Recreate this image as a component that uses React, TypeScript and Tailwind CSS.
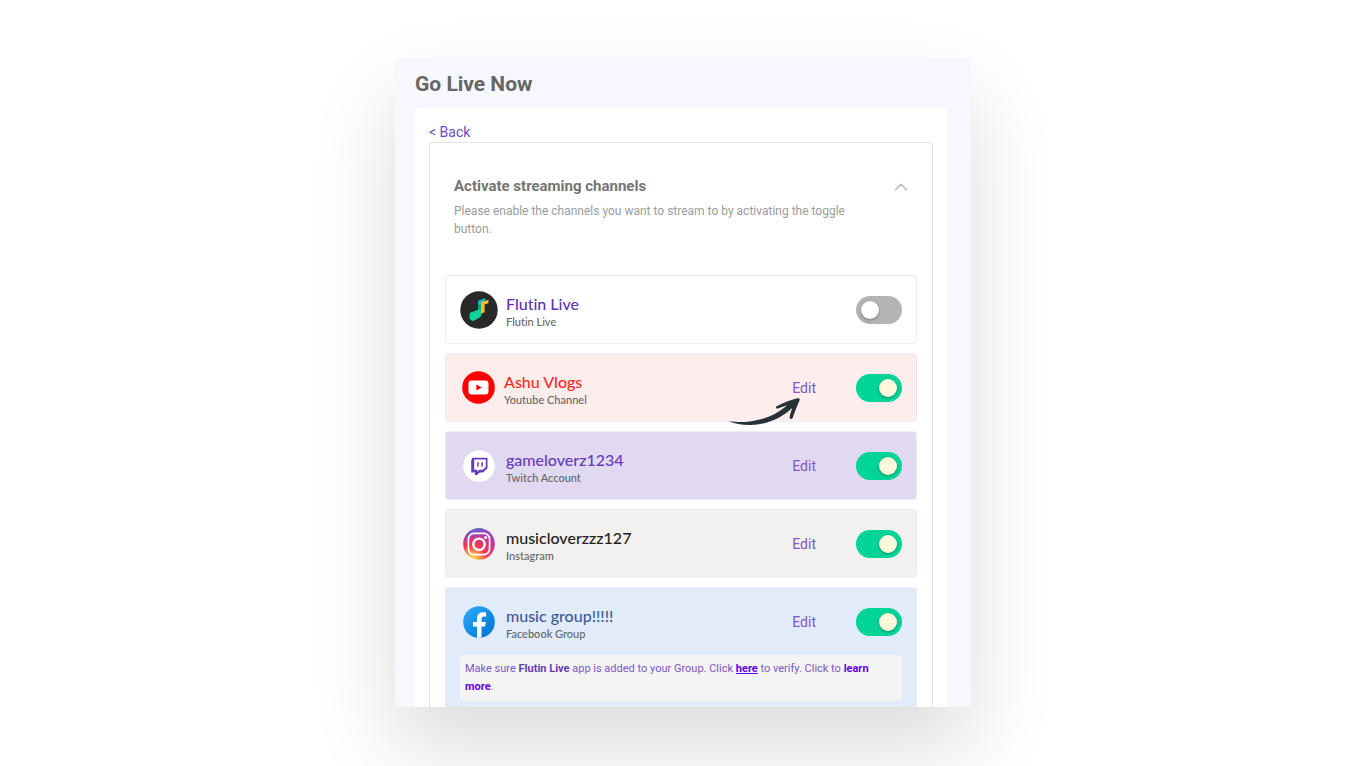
import React, { useState } from 'react';
import { ChevronUp } from 'lucide-react';

interface Channel {
    id: string;
    name: string;
    kind: string;
    icon: React.ReactNode;
    slotClass: string;
    nameClass: string;
    rowClass: string;
    editable: boolean;
    pointer?: boolean;
}

const FlutinIcon = () => (
    <svg width="38" height="38" viewBox="0 0 38 38" aria-hidden="true">
        <circle cx="19" cy="19" r="18.7" fill="#282828" />
        <path d="M18 9.8 25.2 7v4.5l-3.4 1.5v10.5H18z" fill="#0fb5c4" />
        <path d="M18 14l3.2-2v13H18z" fill="#0ca58a" />
        <path d="M20.4 11.6 28.4 8.8v3.4L24.6 13.6v7.6l-3.6 1.6V13z" fill="#fdb92e" />
        <path d="M11.3 21.2l7.5-2.6c1-.4 2 .2 2 1.2v4.6c0 .9-.4 1.6-1.2 2l-5.2 3.2c-.7.4-1.4.5-2.1.1l-1.5-.8c-.8-.4-1.2-1-1.2-1.8v-3.5c0-1.2.6-2 1.7-2.4z" fill="#0fd39a" />
    </svg>
);

const YoutubeIcon = () => (
    <svg width="33" height="33" viewBox="0 0 33 33" aria-hidden="true">
        <circle cx="16.5" cy="16.5" r="16.3" fill="#ff0000" />
        <rect x="6.5" y="9.5" width="20" height="14" rx="3.2" fill="#fff" />
        <path d="M14.3 13.4l5.6 3.1-5.6 3.1z" fill="#f00" />
    </svg>
);

const TwitchIcon = () => (
    <svg width="32" height="32" viewBox="0 0 32 32" aria-hidden="true">
        <circle cx="16" cy="16" r="15.8" fill="#fff" />
        <path
            d="M9.3 7.8h15.2v10.4L20 22.5h-3.3l-2.7 2.6h-2v-2.6H8.2V10.7zm1.9 1.6v10.4h3.2v2l2-2h3.4l3-2.8V9.4z"
            fill="#673ab7"
            fillRule="evenodd"
        />
        <path d="M14.2 12.2h1.5v4.4h-1.5zM18.3 12.2h1.5v4.4h-1.5z" fill="#673ab7" />
    </svg>
);

const InstagramIcon = () => (
    <svg width="32" height="32" viewBox="0 0 32 32" aria-hidden="true">
        <defs>
            <radialGradient id="ig-warm" cx="0.27" cy="1.05" r="1">
                <stop offset="0" stopColor="#ffdd55" />
                <stop offset="0.15" stopColor="#ffcf50" />
                <stop offset="0.5" stopColor="#f8384e" />
                <stop offset="0.85" stopColor="#d0308f" />
                <stop offset="1" stopColor="#a93ab8" />
            </radialGradient>
            <linearGradient id="ig-cool" x1="0.4" y1="0" x2="0.5" y2="0.35">
                <stop offset="0" stopColor="#5a6fc4" />
                <stop offset="1" stopColor="#8a3ac8" stopOpacity="0" />
            </linearGradient>
        </defs>
        <circle cx="16" cy="16" r="15.8" fill="url(#ig-warm)" />
        <circle cx="16" cy="16" r="15.8" fill="url(#ig-cool)" />
        <rect x="5.4" y="5.4" width="21.2" height="21.2" rx="5.6" fill="none" stroke="#fff" strokeWidth="1.7" />
        <circle cx="16" cy="16.3" r="5.7" fill="none" stroke="#fff" strokeWidth="2.4" />
        <circle cx="22.6" cy="9.6" r="1.5" fill="#fff" />
    </svg>
);

const FacebookIcon = () => (
    <svg width="32" height="32" viewBox="0 0 32 32" aria-hidden="true">
        <defs>
            <linearGradient id="fb-blue" x1="0.15" y1="0.1" x2="0.85" y2="0.9">
                <stop offset="0" stopColor="#2aa4f4" />
                <stop offset="1" stopColor="#007ad9" />
            </linearGradient>
        </defs>
        <circle cx="16" cy="16" r="15.8" fill="url(#fb-blue)" />
        <path
            d="M14 31.7V20.6H9.9V16H14v-3.500c0-4.1 2.300-6.2 5.9-6.2 1.2 0 2.3.1 3.1.3v4h-2.1c-1.9 0-2.4 1-2.4 2.3V16h4.3l-.7 4.600h-3.6v11z"
            fill="#fff"
        />
    </svg>
);

// Hand drawn arrow pointing up at the Edit link
const PointerArrow = () => (
    <svg
        className="pointer-events-none absolute top-[19px] right-[14px]"
        width="76"
        height="32"
        viewBox="0 0 76 32"
        aria-hidden="true"
    >
        <path
            d="M2.5 24.3C9 25 17 25.5 24 24.5 40 22.3 52 16.5 61 8.2L51.8 11.600C50.3 12.2 49 10 50.6 9.2 57.500 5.500 64.500 3.300 71.500 1.300 72.800 1 74.200 1.800 73.600 3.200 71 9.800 68.500 15 66.700 20.900 66.200 22.500 63.400 22.100 63.600 20.300 64 17 65.200 14 66.300 11 55 21.500 41 27.500 24.500 28 16.500 28.200 8.500 26.500 2.500 24.300z"
            fill="#263238"
        />
    </svg>
);

const CHANNELS: Channel[] = [
    {
        id: 'flutin',
        name: 'Flutin Live',
        kind: 'Flutin Live',
        icon: <FlutinIcon />,
        slotClass: 'w-[38px]',
        nameClass: 'text-[#5e35b1]',
        rowClass: 'bg-white',
        editable: false
    },
    {
        id: 'youtube',
        name: 'Ashu Vlogs',
        kind: 'Youtube Channel',
        icon: <YoutubeIcon />,
        slotClass: 'w-9',
        nameClass: 'text-[#ff2a1f]',
        rowClass: 'bg-[#fdeeed]',
        editable: true,
        pointer: true
    },
    {
        id: 'twitch',
        name: 'gameloverz1234',
        kind: 'Twitch Account',
        icon: <TwitchIcon />,
        slotClass: 'w-[38px]',
        nameClass: 'text-[#673ab7]',
        rowClass: 'bg-[#e1d9f1]',
        editable: true
    },
    {
        id: 'instagram',
        name: 'musicloverzzz127',
        kind: 'Instagram',
        icon: <InstagramIcon />,
        slotClass: 'w-[38px]',
        nameClass: 'text-[#212121]',
        rowClass: 'bg-[#f2f1ef]',
        editable: true
    },
    {
        id: 'facebook',
        name: 'music group!!!!!',
        kind: 'Facebook Group',
        icon: <FacebookIcon />,
        slotClass: 'w-[38px]',
        nameClass: 'text-[#3b5998]',
        rowClass: 'bg-[#e1ebfa]',
        editable: true
    }
];

interface ChannelRowProps {
    channel: Channel;
    enabled: boolean;
    onToggle: () => void;
}

const ChannelRow: React.FC<ChannelRowProps> = ({ channel, enabled, onToggle }) => (
    <div className="flex h-[67px] items-center px-[14px]">
        <div className={`${channel.slotClass} flex shrink-0 justify-center`}>{channel.icon}</div>
        <label
            htmlFor={channel.id}
            className="ml-2 min-w-0 flex-1 font-['Lato','Noto_Sans',sans-serif] [font-variant-ligatures:none]"
        >
            <span className={`block text-base leading-6 font-medium ${channel.nameClass}`}>{channel.name}</span>
            <span className="block text-[11px] leading-3 font-medium text-[#666]">{channel.kind}</span>
        </label>
        {channel.editable && (
            <div className="relative mr-10">
                <a href="#edit" className="block text-sm leading-5 text-[#7e57c2]">Edit</a>
                {channel.pointer && <PointerArrow />}
            </div>
        )}
        <input
            id={channel.id}
            type="checkbox"
            role="switch"
            checked={enabled}
            onChange={onToggle}
            className="flex h-7 w-[46px] shrink-0 cursor-pointer appearance-none items-center rounded-full bg-[#b4b4b4] px-[5px] before:h-[18px] before:w-[18px] before:rounded-full before:bg-white before:shadow-[0_1px_3px_rgba(0,0,0,0.35)] checked:justify-end checked:bg-[#00d597] checked:before:bg-[#fff8dc]"
        />
    </div>
);

const App: React.FC = () => {
    const [isOpen, setIsOpen] = useState(true);
    const [active, setActive] = useState<string[]>(['youtube', 'twitch', 'instagram', 'facebook']);

    const toggle = (id: string) => {
        setActive(prev => (prev.includes(id) ? prev.filter(item => item !== id) : [...prev, id]));
    };

    return (
        <div className="flex min-h-screen items-start justify-center overflow-hidden bg-white py-[59px] font-['Roboto',sans-serif]">
            <main className="w-full max-w-[576px] bg-[#f6f7ff] pt-[11px] pr-6 pl-5 shadow-[0_40px_80px_rgba(0,0,0,0.14)]">
                <h1 className="mb-[10px] text-[21px] leading-7 font-bold text-[#666]">Go Live Now</h1>

                <div className="rounded-t bg-white px-[14px] pt-[14px]">
                    <a href="#back" className="block w-fit text-sm leading-5 text-[#7348c4]">&lt; Back</a>

                    <section className="rounded-t border border-b-0 border-[#e2e2e2] px-[15px] pt-[33px]">
                        <div className="mb-[37px] flex items-start justify-between pr-[5px] pl-[9px]">
                            <div>
                                <h2 className="text-[15px] leading-5 font-bold text-[#757575]">Activate streaming channels</h2>
                                <p className="mt-[6px] pr-6 text-xs leading-[18px] text-[#9c9c9c]">
                                    Please enable the channels you want to stream to by activating the toggle button.
                                </p>
                            </div>
                            <button
                                type="button"
                                aria-label="Toggle streaming channels"
                                aria-expanded={isOpen}
                                onClick={() => setIsOpen(!isOpen)}
                                className="shrink-0 text-[#b5b5b5]"
                            >
                                <ChevronUp size={22} strokeWidth={1.5} />
                            </button>
                        </div>

                        {isOpen && (
                            <div className="flex flex-col gap-[9px]">
                                {CHANNELS.map(channel => (
                                    <div
                                        key={channel.id}
                                        className={`rounded-[3px] border border-[#e9eef6] last:rounded-b-none last:border-b-0 ${channel.rowClass}`}
                                    >
                                        <ChannelRow
                                            channel={channel}
                                            enabled={active.includes(channel.id)}
                                            onToggle={() => toggle(channel.id)}
                                        />
                                        {channel.id === 'facebook' && (
                                            <div className="px-[14px] pb-[6px]">
                                                <p className="rounded-sm bg-[#f4f4f4] px-[5px] py-[5px] text-[11px] leading-[18px] text-[#7e57c2]">
                                                    Make sure <strong className="text-[#673ab7]">Flutin Live</strong> app is added to your Group. Click{' '}
                                                    <a href="#verify" className="font-bold text-[#6200ea] underline">here</a> to verify. Click to{' '}
                                                    <a href="#learn" className="font-bold text-[#6200ea]">learn more</a>.
                                                </p>
                                            </div>
                                        )}
                                    </div>
                                ))}
                            </div>
                        )}
                    </section>
                </div>
            </main>
        </div>
    );
};

export default App;
